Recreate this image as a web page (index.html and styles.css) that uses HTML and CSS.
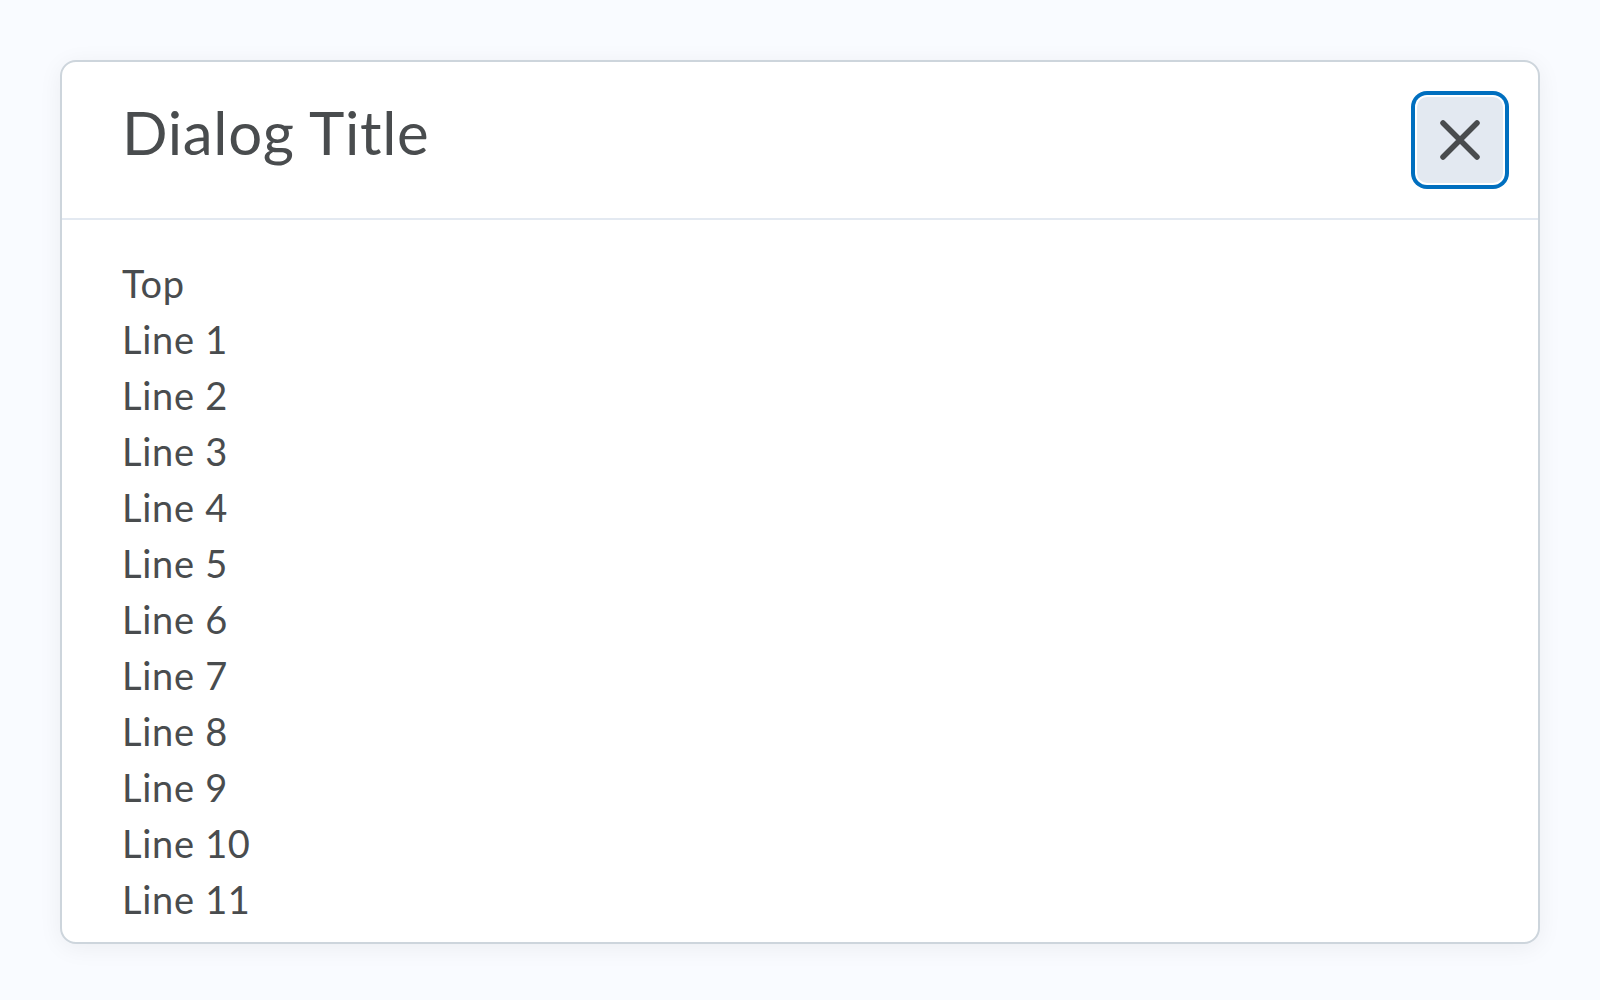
FILE: index.html
```html
<!DOCTYPE html>
<html lang="en">
<head>
<meta charset="utf-8">
<title>Dialog</title>
<link rel="stylesheet" href="styles.css">
</head>
<body>
<div class="dialog" role="dialog" aria-labelledby="dlg-title">
  <div class="dialog-header">
    <h2 class="dialog-title" id="dlg-title">Dialog Title</h2>
    <button class="close-btn" aria-label="Close">
      <svg viewBox="0 0 40 40" width="40" height="40" aria-hidden="true">
        <path d="M3 3 L37 37 M37 3 L3 37" fill="none" stroke="#494c4e" stroke-width="5.5" stroke-linecap="round"/>
      </svg>
    </button>
  </div>
  <div class="dialog-body">
    <div class="line">Top</div>
    <div class="line">Line 1</div>
    <div class="line">Line 2</div>
    <div class="line">Line 3</div>
    <div class="line">Line 4</div>
    <div class="line">Line 5</div>
    <div class="line">Line 6</div>
    <div class="line">Line 7</div>
    <div class="line">Line 8</div>
    <div class="line">Line 9</div>
    <div class="line">Line 10</div>
    <div class="line">Line 11</div>
  </div>
</div>
</body>
</html>
```

FILE: styles.css
```css
html, body {
  margin: 0;
  background: #f9fbff;
}
body {
  padding: 60px;
  font-family: Lato, "Noto Sans", sans-serif;
  color: #494c4e;
}
.dialog {
  box-sizing: border-box;
  width: 1480px;
  background: #ffffff;
  border: 2px solid #cdd5dc;
  border-radius: 16px;
  box-shadow: 0 4px 24px rgba(0, 0, 0, 0.06);
}
.dialog-header {
  display: flex;
  justify-content: space-between;
  align-items: flex-start;
  padding: 34px 35px 35px 60px;
  border-bottom: 2px solid #e3e9f1;
}
.dialog-title {
  margin: 0;
  font-size: 60px;
  font-weight: 400;
  line-height: 72px;
  letter-spacing: 0.7px;
}
.close-btn {
  margin-top: 1px;
  width: 86px;
  height: 86px;
  padding: 0;
  border: none;
  border-radius: 10px;
  background: #e3e9f1;
  box-shadow: 0 0 0 2px #ffffff, 0 0 0 6px #006fbf;
  display: flex;
  align-items: center;
  justify-content: center;
  cursor: pointer;
}
.close-btn svg {
  width: 40px;
  height: 40px;
  display: block;
}
.dialog-body {
  padding: 35px 60px 15px 60px;
  font-size: 38px;
  line-height: 56px;
  letter-spacing: 0.7px;
}
```
